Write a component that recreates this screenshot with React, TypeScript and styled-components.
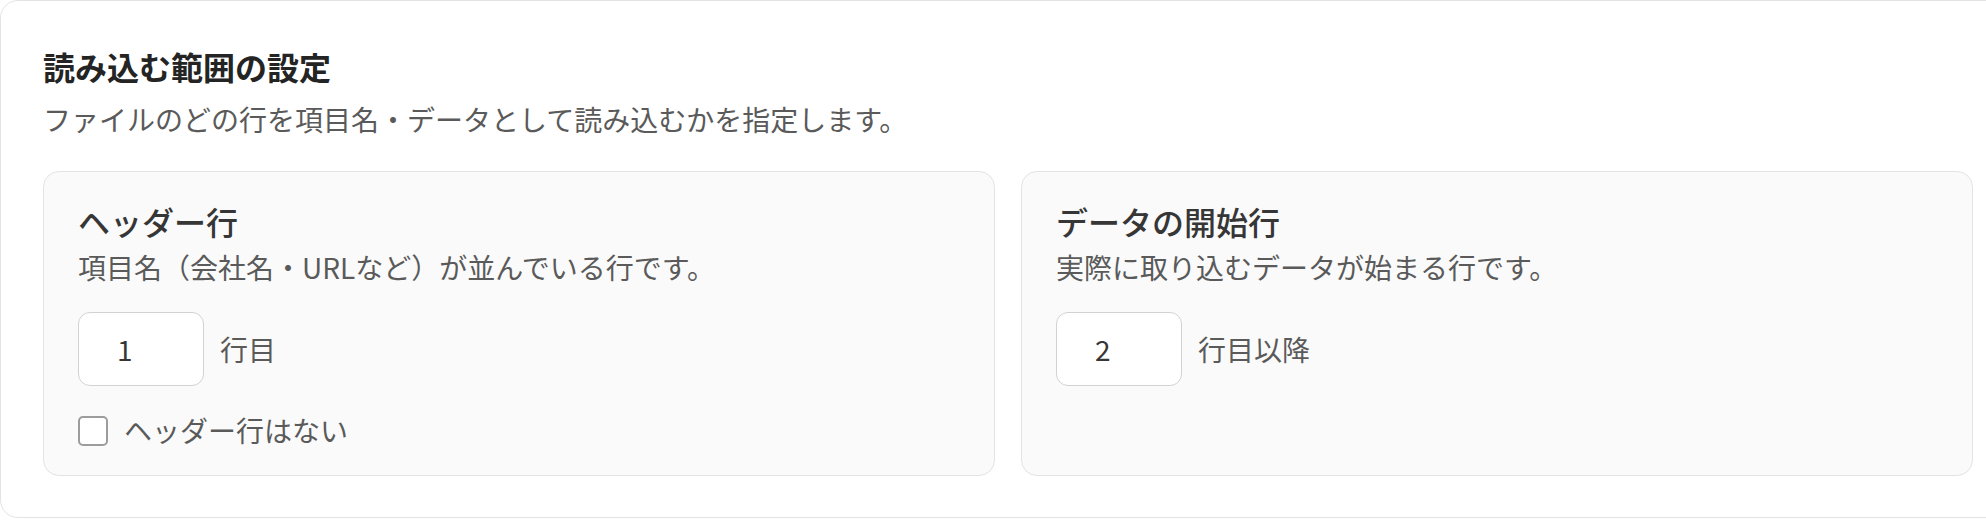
import React from 'react';
import styled, { createGlobalStyle } from 'styled-components';

const TEXT_DARK = '#242424';
const TEXT_MID = '#363636';
const TEXT_SUB = '#5a5a5a';
const BORDER = '#e3e3e3';
const PANEL_BG = '#fafafa';

const GlobalStyle = createGlobalStyle`
  html, body {
    margin: 0;
    padding: 0;
    background: #ffffff;
    overflow: hidden;
  }
  body {
    font-family: "Noto Sans CJK JP", "Noto Sans", sans-serif;
    color: ${TEXT_DARK};
  }
  * {
    box-sizing: border-box;
  }
`;

interface RangeCardProps {
  title: string;
  description: string;
  value: number;
  unit: string;
  children?: React.ReactNode;
}

const RangeCard = (props: RangeCardProps) => {
  const { title, description, value, unit, children } = props;

  return (
    <Card>
      <CardTitle>{title}</CardTitle>
      <CardDescription>{description}</CardDescription>
      <InputRow>
        <NumberInput type="text" defaultValue={String(value)} />
        <Unit>{unit}</Unit>
      </InputRow>
      {children}
    </Card>
  );
};

const App = () => {
  return (
    <>
      <GlobalStyle />
      <Section>
        <Title>読み込む範囲の設定</Title>
        <Subtitle>ファイルのどの行を項目名・データとして読み込むかを指定します。</Subtitle>
        <CardGrid>
          <RangeCard
            title="ヘッダー行"
            description="項目名（会社名・URLなど）が並んでいる行です。"
            value={1}
            unit="行目"
          >
            <CheckRow>
              <CheckBox type="checkbox" />
              <CheckLabel>ヘッダー行はない</CheckLabel>
            </CheckRow>
          </RangeCard>
          <RangeCard
            title="データの開始行"
            description="実際に取り込むデータが始まる行です。"
            value={2}
            unit="行目以降"
          />
        </CardGrid>
      </Section>
    </>
  );
};

export default App;

const Section = styled.section`
  width: 2016px;
  background-color: #ffffff;
  border: 1px solid ${BORDER};
  border-radius: 18px;
  padding: 43px 42px 41px;
`;

const Title = styled.h2`
  margin: 0;
  font-size: 32px;
  line-height: 1.4;
  font-weight: 700;
  color: ${TEXT_DARK};
`;

const Subtitle = styled.p`
  margin: 8px 0 0;
  font-size: 28px;
  line-height: 1.6;
  color: ${TEXT_SUB};
`;

const CardGrid = styled.div`
  display: grid;
  grid-template-columns: 1fr 1fr;
  gap: 26px;
  margin-top: 29px;
`;

const Card = styled.div`
  display: flex;
  flex-direction: column;
  background-color: ${PANEL_BG};
  border: 1px solid ${BORDER};
  border-radius: 16px;
  padding: 27px 34px 22px;
`;

const CardTitle = styled.h3`
  margin: 0;
  font-size: 32px;
  line-height: 1.4;
  font-weight: 500;
  color: ${TEXT_MID};
`;

const CardDescription = styled.p`
  margin: 2px 0 0;
  font-size: 28px;
  line-height: 1.6;
  color: ${TEXT_SUB};
`;

const InputRow = styled.div`
  display: flex;
  align-items: center;
  gap: 16px;
  margin-top: 22px;
`;

const NumberInput = styled.input`
  width: 126px;
  height: 74px;
  padding: 0 0 0 38px;
  border: 1.5px solid #d2d2d2;
  border-radius: 12px;
  background-color: #ffffff;
  font-family: "Noto Sans CJK JP", "Noto Sans", sans-serif;
  font-size: 28px;
  color: ${TEXT_MID};
  outline: none;
`;

const Unit = styled.span`
  font-size: 28px;
  line-height: 1.6;
  color: ${TEXT_SUB};
`;

const CheckRow = styled.label`
  display: flex;
  align-items: center;
  gap: 16px;
  margin-top: 22px;
  cursor: pointer;
`;

const CheckBox = styled.input`
  appearance: none;
  margin: 0;
  width: 30px;
  height: 30px;
  border: 2px solid #9c9c9c;
  border-radius: 5px;
  background-color: #ffffff;
`;

const CheckLabel = styled.span`
  font-size: 28px;
  line-height: 1.6;
  color: ${TEXT_SUB};
`;
